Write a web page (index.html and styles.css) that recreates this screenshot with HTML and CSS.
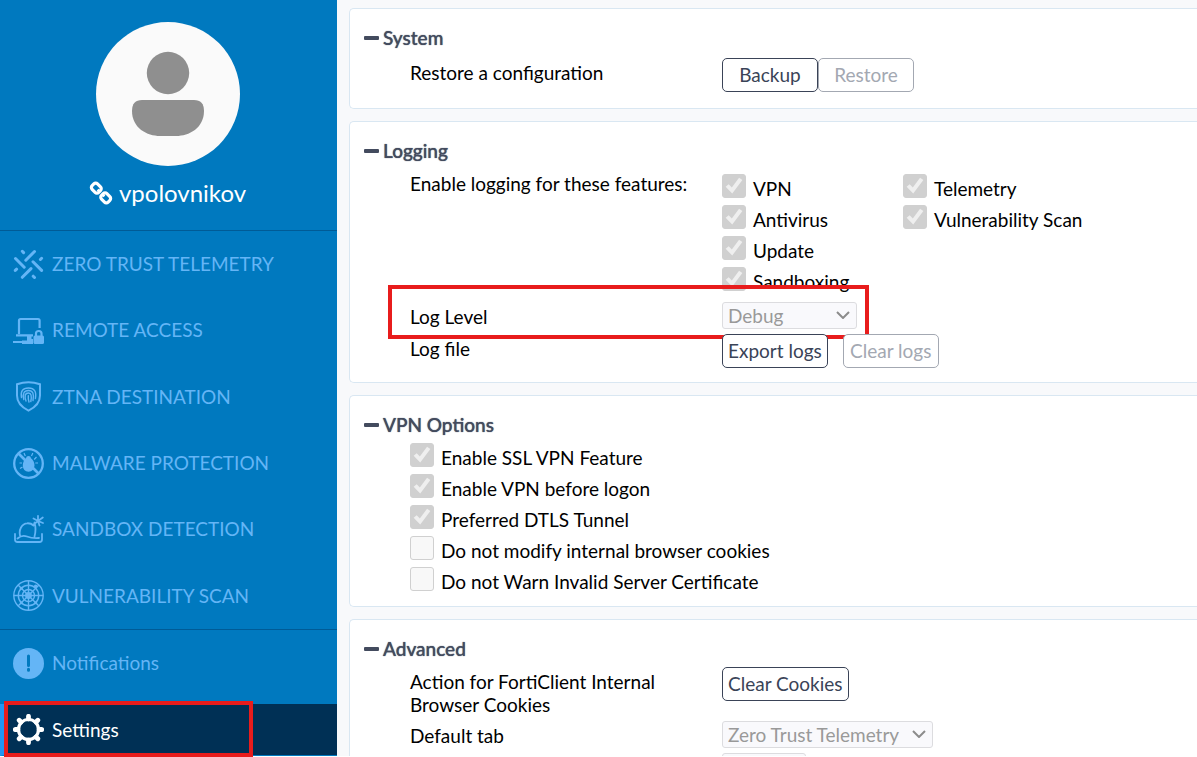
FILE: index.html
```html
<!DOCTYPE html>
<html lang="en">
<head>
<meta charset="utf-8">
<title>Settings</title>
<link rel="stylesheet" href="styles.css">
</head>
<body>
<div class="app">
  <aside class="sidebar">
    <div class="profile">
      <svg class="avatar" viewBox="0 0 144 144" aria-hidden="true">
        <circle cx="72" cy="72" r="72" fill="#fafafa"/>
        <circle cx="72" cy="51" r="21.2" fill="#8f8f8f"/>
        <path d="M46 78H98Q108 78 108 89C108 106 93 114 80 114H64C51 114 36 106 36 89Q36 78 46 78Z" fill="#8f8f8f"/>
      </svg>
      <div class="user">
        <svg class="link-icon" viewBox="0 0 24 24" fill="none" stroke="#fff" stroke-width="3.2" aria-hidden="true">
          <rect x="2.6" y="3.3" width="9.4" height="7.6" rx="2.6" transform="rotate(45 7.3 7.1)"/>
          <rect x="12" y="13.1" width="9.4" height="7.6" rx="2.6" transform="rotate(45 16.7 16.9)"/>
          <path d="M8.6 8.6l2.4 2.4M13.2 13.2l2.2 2.2" stroke-width="2.6"/>
        </svg>
        <span>vpolovnikov</span>
      </div>
    </div>
    <nav class="nav">
      <a class="item" href="#telemetry">
        <svg viewBox="0 0 31 31" fill="none" stroke="currentColor" stroke-width="3" stroke-linecap="round" aria-hidden="true"><path d="M12.800 11.200 21.500 2.500M20 12.800 28.600 21.400M18 19.600 9.300 28.300M2.500 9.500 11.200 18.200M9.300 2.300 10.600 3.600M28.600 9.300 27.400 10.500M21.500 28.500 20.200 27.200M2.300 21.400 3.600 20.200"/></svg>
        <span>ZERO TRUST TELEMETRY</span></a>
      <a class="item" href="#remote">
        <svg viewBox="0 0 31 31" fill="none" stroke="currentColor" stroke-width="2.200" aria-hidden="true"><path d="M6 19V5.600Q6 4 7.600 4H25Q26.600 4 26.600 5.600V13M3 20.300H20M0 27H10"/><path d="M14 21H18.500V24H20V29H9V25.500H14Z" fill="currentColor" stroke="none"/><rect x="20.500" y="20.500" width="10.500" height="8.500" rx="1.500" fill="currentColor" stroke="none"/><path d="M23 21V18.500Q23 16 25.800 16Q28.500 16 28.500 18.500V21"/></svg>
        <span>REMOTE ACCESS</span></a>
      <a class="item" href="#ztna">
        <svg viewBox="0 0 31 31" fill="none" stroke="currentColor" stroke-width="2" aria-hidden="true"><path d="M4 3.300Q15.500-.8 27 3.300V14.500Q27 24 15.500 29.600Q4 24 4 14.500Z"/><g stroke-width="1.400" stroke-linecap="round"><path d="M8.500 16.500Q6.700 7 15.500 7Q24.300 7 22.400 17.500M10.800 18.500Q8.700 9.500 15.500 9.500Q22 9.500 20 19.500M13 20Q10.300 12 15.500 12Q19.500 12 17.800 20.500M15.300 14.800Q15 18 16 21"/></g></svg>
        <span>ZTNA DESTINATION</span></a>
      <a class="item" href="#malware">
        <svg viewBox="0 0 31 31" fill="none" stroke="currentColor" stroke-width="2" aria-hidden="true"><circle cx="15.500" cy="15.500" r="14.300" stroke-width="2.300"/><path d="M5.500 5.500 25.500 25.500" stroke-width="2.600"/><path d="M15.500 8Q17.800 8 18 10.200Q21.500 13 21.500 17.500Q21 23.500 15.500 23.800Q10 23.500 9.800 17.500Q9.800 13 13 10.200Q13.200 8 15.500 8Z" fill="currentColor" stroke="none"/><path d="M12.300 8 11 5M18.500 8 19.800 5M21.200 11.500 23.500 9M22.300 15H25M9 15H6.500M9.500 19 7 20.500" stroke-width="1.200"/></svg>
        <span>MALWARE PROTECTION</span></a>
      <a class="item" href="#sandbox">
        <svg viewBox="0 0 31 31" fill="none" stroke="currentColor" stroke-width="1.800" stroke-linecap="round" stroke-linejoin="round" aria-hidden="true"><path d="M2 20V25.500Q2 28 4.500 28H26.500Q29 28 29 25.500V20M4.500 24.500Q9 20.500 14 22.500T26 24M7 21.500Q6 17 8 13.500Q10.500 9.300 14 9.300Q18 9 20.500 11.500M21.500 8.500Q23.500 15 21.500 22.500M25 7V1.800M25 7 29.800 3.500M25 7 30 9M25 7 26.500 11.500M25 7 20.800 10.200M25 7 20.500 4.500"/></svg>
        <span>SANDBOX DETECTION</span></a>
      <a class="item" href="#vulnerability">
        <svg viewBox="0 0 31 31" fill="none" stroke="currentColor" stroke-width="1.400" aria-hidden="true"><circle cx="15.500" cy="15.500" r="14.700"/><circle cx="15.500" cy="15.500" r="10.200"/><circle cx="15.500" cy="15.500" r="6"/><circle cx="15.500" cy="15.500" r="2.700" fill="currentColor"/><path d="M15.500 1V30M1 15.500H30M5.300 5.300 25.700 25.700M25.700 5.300 5.300 25.700"/><g fill="currentColor" stroke="none"><circle cx="22.700" cy="6.300" r="1.800"/><circle cx="8.300" cy="8.300" r="1.500"/><circle cx="8.300" cy="22.700" r="1.500"/><circle cx="22.700" cy="22.700" r="1.500"/></g></svg>
        <span>VULNERABILITY SCAN</span></a>
    </nav>
    <a class="item notifications" href="#notifications">
      <svg viewBox="0 0 31 31" aria-hidden="true"><circle cx="15.500" cy="15.500" r="15.500" fill="currentColor"/><path d="M15.500 8V17.500M15.500 21.300V22.300" stroke="#0079bf" stroke-width="3" stroke-linecap="round"/></svg>
      <span>Notifications</span></a>
    <a class="item settings" href="#settings" aria-current="page">
      <svg viewBox="0 0 31 31" fill="none" stroke="#fff" aria-hidden="true"><circle cx="15.500" cy="15.500" r="10" stroke-width="3.200"/><path d="M15.500 2.300V5M15.500 26V28.700M2.300 15.500H5M26 15.500H28.700M6.200 6.200 8 8M23 23 24.800 24.800M24.800 6.200 23 8M8 23 6.200 24.800" stroke-width="4.800" stroke-linecap="round"/></svg>
      <span>Settings</span>
      <span class="mark mark-settings"></span></a>
  </aside>

  <main class="main">
    <section class="card">
      <h2 class="title"><button class="toggle" aria-label="Collapse System"></button>System</h2>
      <div class="row">
        <div class="label">Restore a configuration</div>
        <div class="controls"><button class="btn wide">Backup</button><button class="btn wide" disabled>Restore</button></div>
      </div>
    </section>

    <section class="card logging">
      <h2 class="title"><button class="toggle" aria-label="Collapse Logging"></button>Logging</h2>
      <div class="row features">
        <div class="label">Enable logging for these features:</div>
        <div>
          <label class="check"><input type="checkbox" checked disabled><span>VPN</span></label>
          <label class="check"><input type="checkbox" checked disabled><span>Antivirus</span></label>
          <label class="check"><input type="checkbox" checked disabled><span>Update</span></label>
          <label class="check"><input type="checkbox" checked disabled><span>Sandboxing</span></label>
        </div>
        <div>
          <label class="check"><input type="checkbox" checked disabled><span>Telemetry</span></label>
          <label class="check"><input type="checkbox" checked disabled><span>Vulnerability Scan</span></label>
        </div>
      </div>
      <div class="row level">
        <label class="label" for="level">Log Level</label>
        <div class="controls"><span class="select level-select"><select id="level" disabled><option>Debug</option></select><svg viewBox="0 0 14 8" aria-hidden="true"><path d="M1 1 7 7 13 1"/></svg></span></div>
        <span class="mark mark-level"></span>
      </div>
      <div class="row">
        <div class="label">Log file</div>
        <div class="controls spaced"><button class="btn">Export logs</button><button class="btn wide" disabled>Clear logs</button></div>
      </div>
    </section>

    <section class="card vpn">
      <h2 class="title"><button class="toggle" aria-label="Collapse VPN Options"></button>VPN Options</h2>
      <div class="options">
        <label class="check"><input type="checkbox" checked disabled><span>Enable SSL VPN Feature</span></label>
        <label class="check"><input type="checkbox" checked disabled><span>Enable VPN before logon</span></label>
        <label class="check"><input type="checkbox" checked disabled><span>Preferred DTLS Tunnel</span></label>
        <label class="check"><input type="checkbox" disabled><span>Do not modify internal browser cookies</span></label>
        <label class="check"><input type="checkbox" disabled><span>Do not Warn Invalid Server Certificate</span></label>
      </div>
    </section>

    <section class="card advanced">
      <h2 class="title"><button class="toggle" aria-label="Collapse Advanced"></button>Advanced</h2>
      <div class="row">
        <div class="label">Action for FortiClient Internal Browser Cookies</div>
        <div class="controls"><button class="btn">Clear Cookies</button></div>
      </div>
      <div class="row">
        <label class="label" for="tab">Default tab</label>
        <div class="controls"><span class="select tab-select"><select id="tab" disabled><option>Zero Trust Telemetry</option></select><svg viewBox="0 0 14 8" aria-hidden="true"><path d="M1 1 7 7 13 1"/></svg></span></div>
      </div>
      <div class="row">
        <div class="label"></div>
        <div class="controls"><span class="select short-select"><select aria-label="Option" disabled></select></span></div>
      </div>
    </section>
  </main>
</div>
</body>
</html>
```
FILE: styles.css
```css
* {
  box-sizing: border-box;
}

body {
  margin: 0;
  font: 19px/24px Lato, "Open Sans", sans-serif;
  color: #000;
  background: #fff;
}

.app {
  display: flex;
  height: 100vh;
  overflow: hidden;
  padding-bottom: 1px;
}

.sidebar {
  display: flex;
  flex-direction: column;
  flex: 0 0 337px;
  background: #0079bf;
}

.profile {
  display: flex;
  flex-direction: column;
  align-items: center;
  gap: 13px;
  padding: 22px 2px 23px 0;
  border-bottom: 1px solid #005b96;
}

.avatar {
  width: 144px;
  height: 144px;
}

.user {
  display: flex;
  align-items: center;
  gap: 6px;
  color: #fff;
  font-size: 24px;
  line-height: 28px;
}

.link-icon {
  width: 24px;
  height: 24px;
}

.nav {
  display: flex;
  flex: 1;
  flex-direction: column;
  border-bottom: 1px solid #005b96;
}

.item {
  display: flex;
  flex: 1;
  align-items: center;
  gap: 8px;
  padding-left: 13px;
  color: #64b5f6;
  text-decoration: none;
}

.item svg {
  flex: none;
  width: 31px;
  height: 31px;
}

.notifications {
  flex: 0 0 74px;
  padding-bottom: 8px;
}

.settings {
  position: relative;
  flex: 0 0 52px;
  padding-left: 9px;
  border-left: 4px solid #2196f3;
  border-bottom: 1px solid #0079bf;
  background: #003055;
  color: #fff;
}

.mark {
  position: absolute;
  border: 4px solid #e81c1c;
  pointer-events: none;
}

.mark-settings {
  inset: -3px auto -2px 0;
  width: 249px;
}

.main {
  display: flex;
  flex: 1;
  flex-direction: column;
  gap: 12px;
  min-width: 0;
  padding: 8px 0 0 12px;
  overflow: hidden;
  background: #f8f9fb;
}

.card {
  flex: none;
  padding: 17px 0 16px 14px;
  border: 1px solid #d9e7f2;
  border-right: 0;
  border-radius: 5px 0 0 5px;
  background: #fff;
}

.title {
  display: flex;
  align-items: center;
  gap: 4px;
  margin: 0 0 8px;
  color: #434b5e;
  font-size: 19px;
  font-weight: 500;
  line-height: 24px;
  text-shadow: 0 0 1px #434b5e;
}

.toggle {
  width: 15px;
  height: 4px;
  padding: 0;
  border: 0;
  border-radius: 1px;
  background: #434b5e;
}

.row {
  position: relative;
  display: grid;
  grid-template-columns: 312px 181px 1fr;
  margin-top: 4px;
  padding-left: 46px;
}

.title + .row {
  margin-top: 0;
}

.label {
  padding: 3px 40px 0 0;
  line-height: 23px;
}

.controls {
  display: flex;
  grid-column: 2 / -1;
}

.spaced {
  gap: 15px;
}

.logging {
  padding-bottom: 14px;
}

.features .label {
  padding: 1px 0 0;
}

.features + .level {
  margin-top: 7px;
  padding-bottom: 1px;
}

.btn {
  height: 34px;
  padding: 0 5px;
  border: 1px solid #3a4357;
  border-radius: 5px;
  background: #fff;
  color: #3a4357;
  font: inherit;
}

.btn:disabled {
  border-color: #a3a8b2;
  color: #a3a8b2;
}

.wide {
  width: 96px;
}

.check {
  display: flex;
  gap: 7px;
  height: 31px;
  padding-top: 3px;
}

.check span {
  padding-top: 3px;
}

.check input {
  flex: none;
  width: 24px;
  height: 24px;
  margin: 0;
  border: 1px solid #d0d0d0;
  border-radius: 3px;
  background: #f8f8f8;
  appearance: none;
}

.check input:checked {
  background: #d0d0d0;
}

.check input:checked::before {
  content: "";
  display: block;
  height: 22px;
  background: #efefef;
  clip-path: polygon(12% 53%, 26% 42%, 40% 57%, 73% 12%, 88% 23%, 42% 84%);
}

.options {
  margin-top: -5px;
  padding-left: 46px;
}

.vpn {
  padding-bottom: 11px;
}

.advanced .title {
  margin-bottom: 6px;
}

.advanced .row + .row {
  margin-top: 5px;
}

.select {
  position: relative;
  display: flex;
  height: 27px;
}

.select select {
  width: 100%;
  padding: 0 5px;
  border: 1px solid #dcdcdf;
  border-radius: 3px;
  background: #f9f9fc;
  color: #999;
  font: inherit;
  opacity: 1;
  appearance: none;
}

.select svg {
  position: absolute;
  top: 9px;
  right: 7px;
  width: 14px;
  height: 8px;
  fill: none;
  stroke: #8c8c8c;
  stroke-width: 2;
}

.level-select {
  width: 135px;
}

.tab-select {
  width: 211px;
}

.short-select {
  width: 84px;
}

.mark-level {
  inset: -17px auto -9px 24px;
  width: 481px;
}
```
